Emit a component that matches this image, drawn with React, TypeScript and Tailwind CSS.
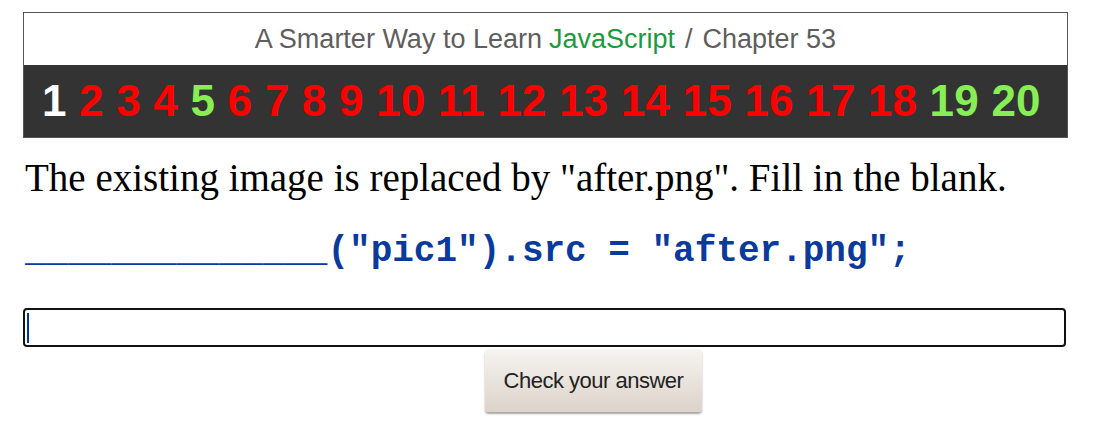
export default function App() {
  const nums = [
    { n: 1, c: 'text-white' },
    { n: 2, c: 'text-[#ff0000]' },
    { n: 3, c: 'text-[#ff0000]' },
    { n: 4, c: 'text-[#ff0000]' },
    { n: 5, c: 'text-[#88ee55]' },
    { n: 6, c: 'text-[#ff0000]' },
    { n: 7, c: 'text-[#ff0000]' },
    { n: 8, c: 'text-[#ff0000]' },
    { n: 9, c: 'text-[#ff0000]' },
    { n: 10, c: 'text-[#ff0000]' },
    { n: 11, c: 'text-[#ff0000]' },
    { n: 12, c: 'text-[#ff0000]' },
    { n: 13, c: 'text-[#ff0000]' },
    { n: 14, c: 'text-[#ff0000]' },
    { n: 15, c: 'text-[#ff0000]' },
    { n: 16, c: 'text-[#ff0000]' },
    { n: 17, c: 'text-[#ff0000]' },
    { n: 18, c: 'text-[#ff0000]' },
    { n: 19, c: 'text-[#88ee55]' },
    { n: 20, c: 'text-[#88ee55]' },
  ];

  return (
    <div className="w-[1106px] h-[427px] bg-white pt-[12px] pl-[23px] overflow-hidden">
      {/* Header box */}
      <div className="w-[1045px] border border-[#555]">
        <div className="h-[52px] flex items-center justify-center text-[27px] text-[#5e5e5e] font-['Liberation_Sans',Arial,sans-serif]">
          <span>A Smarter Way to Learn</span>
          <span className="text-[#1a9b3c] ml-[7px]">JavaScript</span>
          <span className="mx-[10px]">/</span>
          <span>Chapter 53</span>
        </div>
        <div className="h-[72px] bg-[#333] flex items-center pl-[18px] text-[44px] tracking-[0.2px] font-bold font-['Liberation_Sans',Arial,sans-serif] whitespace-pre">
          {nums.map((x, i) => (
            <span key={x.n} className={x.c}>
              {x.n}
              {i < nums.length - 1 ? ' ' : ''}
            </span>
          ))}
        </div>
      </div>

      {/* Question */}
      <p className="mt-[18px] pl-[2px] text-[39px] text-black font-['Liberation_Serif',Georgia,serif] leading-[44px]">
        The existing image is replaced by "after.png". Fill in the blank.
      </p>

      {/* Code */}
      <div className="mt-[32px] pl-[2px] text-[36px] font-bold text-[#0a3a9c] font-['Liberation_Mono','Courier_New',monospace] leading-[40px] whitespace-pre">
        ______________("pic1").src = "after.png";
      </div>

      {/* Answer input */}
      <div className="mt-[36px] w-[1043px] h-[39px] border-2 border-[#111] rounded-[4px] flex items-center pl-[2px]">
        <div className="w-[2px] h-[30px] bg-[#0033aa]" />
      </div>

      {/* Button */}
      <button className="mt-[2px] ml-[462px] w-[217px] h-[63px] rounded-[4px] bg-gradient-to-b from-[#f6f4f1] to-[#dcd3ca] shadow-[0_2px_2px_rgba(0,0,0,0.35)] text-[22px] text-[#222] tracking-[-0.5px] font-['Liberation_Sans',Arial,sans-serif]">
        Check your answer
      </button>
    </div>
  );
}
